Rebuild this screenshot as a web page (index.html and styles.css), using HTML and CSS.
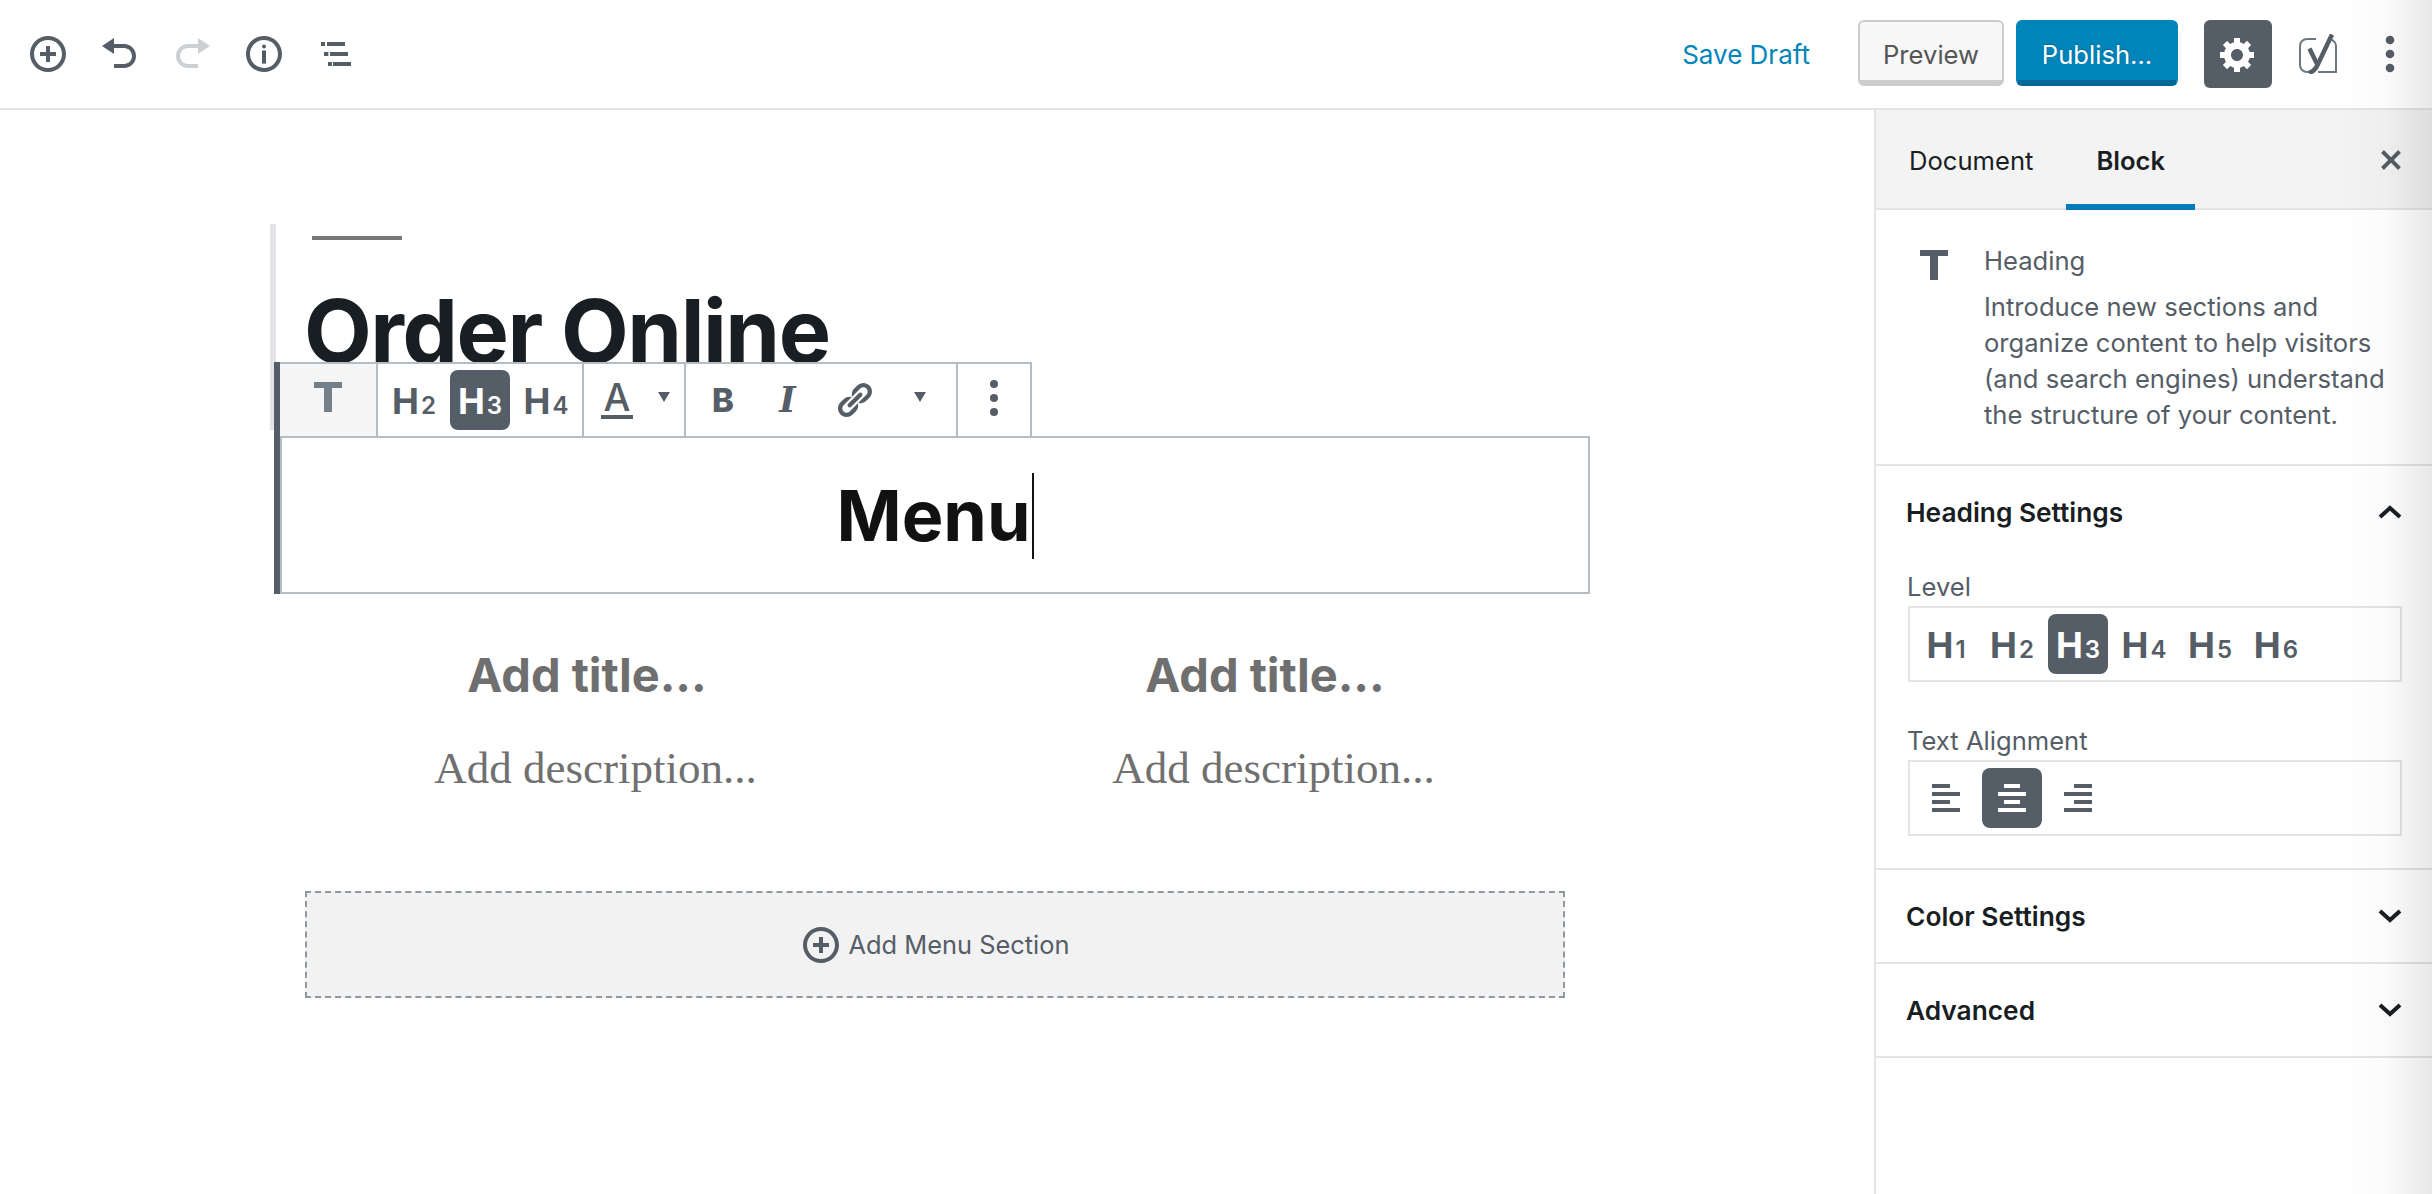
FILE: index.html
```html
<!DOCTYPE html>
<html lang="en">
<head>
<meta charset="utf-8">
<title>Edit Post</title>
<link rel="stylesheet" href="styles.css">
</head>
<body>
<div class="app">
  <header class="topbar">
    <div class="tools">
      <button class="tool"><svg viewBox="0 0 20 20"><path d="M10 1c-5 0-9 4-9 9s4 9 9 9 9-4 9-9-4-9-9-9zm0 16c-3.9 0-7-3.1-7-7s3.1-7 7-7 7 3.1 7 7-3.1 7-7 7zm1-11H9v3H6v2h3v3h2v-3h3V9h-3V6z"/></svg></button>
      <button class="tool"><svg viewBox="0 0 20 20"><path d="M12 5H7V2L1 6l6 4V7h5c2.2 0 4 1.8 4 4s-1.8 4-4 4H7v2h5c3.3 0 6-2.7 6-6s-2.7-6-6-6z"/></svg></button>
      <button class="tool tool-off"><svg viewBox="0 0 20 20"><path d="M8 5h5V2l6 4-6 4V7H8c-2.2 0-4 1.8-4 4s1.8 4 4 4h5v2H8c-3.3 0-6-2.7-6-6s2.7-6 6-6z"/></svg></button>
      <button class="tool"><svg viewBox="0 0 20 20"><path d="M10 1c-5 0-9 4-9 9s4 9 9 9 9-4 9-9-4-9-9-9zm0 16c-3.9 0-7-3.1-7-7s3.1-7 7-7 7 3.1 7 7-3.1 7-7 7z"/><circle cx="10" cy="6.2" r="1"/><rect x="9" y="8.2" width="2" height="6.6"/></svg></button>
      <button class="tool"><svg viewBox="0 0 20 20"><rect x="2.5" y="4" width="2" height="2"/><rect x="5.5" y="4" width="9" height="2"/><rect x="4" y="9" width="2.2" height="2"/><rect x="7" y="9" width="9" height="2"/><rect x="6" y="14" width="2" height="2"/><rect x="8.5" y="14" width="9" height="2"/></svg></button>
    </div>
    <div class="actions">
      <a class="save">Save Draft</a>
      <button class="btn btn-preview">Preview</button>
      <button class="btn btn-publish">Publish...</button>
      <button class="gear"><svg viewBox="0 0 20 20"><path d="M18 12h-2.18c-.17.7-.44 1.35-.81 1.93l1.54 1.54-2.1 2.1-1.54-1.54c-.58.36-1.23.63-1.91.79V19H8v-2.18c-.68-.16-1.33-.43-1.91-.79l-1.54 1.54-2.12-2.12 1.54-1.54c-.36-.58-.63-1.23-.79-1.91H1V9.03h2.17c.16-.7.44-1.35.8-1.94L2.43 5.55l2.1-2.1 1.54 1.54c.58-.37 1.24-.64 1.93-.81V2h3v2.18c.68.16 1.33.43 1.91.79l1.54-1.54 2.12 2.12-1.54 1.54c.36.59.64 1.24.8 1.94H18V12zm-8.5 1.5c1.66 0 3-1.34 3-3s-1.34-3-3-3-3 1.34-3 3 1.34 3 3 3z"/></svg></button>
      <svg class="yoast" viewBox="0 0 38 40"><path class="yoast-box" d="M17 5H8a7 7 0 0 0-7 7v19a7 7 0 0 0 7 7h6M31 5.500a6.500 6.500 0 0 1 6 6.500v26H19"/><path class="yoast-y" d="M10.500 14.500L18 30"/><path class="yoast-y" d="M33 .5L18.500 31c-1.800 4-4 6.500-8.500 7.800"/></svg>
      <svg class="dots" viewBox="0 0 40 40"><circle cx="20" cy="6" r="4.300"/><circle cx="20" cy="20" r="4.300"/><circle cx="20" cy="34" r="4.300"/></svg>
    </div>
  </header>

  <div class="main">
    <main class="editor">
      <section class="prev-block">
        <div class="rule"></div>
        <h1 class="order">Order Online</h1>
      </section>

      <section class="menu-block">
        <div class="side-bar"></div>
        <div class="block-toolbar">
          <div class="cell cell-type"><svg class="t-icon" viewBox="0 0 28 30"><path d="M0 0h28v6H18v24H10V6H0z"/></svg></div>
          <div class="cell cell-levels">
            <span class="hbtn"><b>H</b><i>2</i></span>
            <span class="hbtn hbtn-on"><b>H</b><i>3</i></span>
            <span class="hbtn"><b>H</b><i>4</i></span>
          </div>
          <div class="cell cell-color">
            <span class="color-a">A</span>
            <svg class="caret-down" viewBox="0 0 12 10"><path d="M0 0h12L6 10z"/></svg>
          </div>
          <div class="cell cell-format">
            <span class="fmt-b">B</span>
            <span class="fmt-i">I</span>
            <svg class="fmt-link" viewBox="0 0 20 20"><path d="M17.740 2.760c1.680 1.690 1.680 4.410 0 6.100l-1.530 1.520c-1.120 1.120-2.700 1.470-4.140 1.090l2.620-2.610.76-.77.76-.76c.84-.84.84-2.200 0-3.040-.84-.85-2.200-.85-3.040 0l-.77.76-3.380 3.380c-.37-1.440-.02-3.020 1.100-4.140l1.520-1.530c1.690-1.680 4.420-1.680 6.100 0zM8.590 13.430l5.340-5.340c.42-.42.42-1.100 0-1.520-.44-.43-1.130-.39-1.530 0l-5.330 5.340c-.42.42-.42 1.100 0 1.520.44.43 1.130.39 1.520 0zm-.76 2.290l4.140-4.150c.38 1.440.03 3.020-1.090 4.140l-1.520 1.530c-1.690 1.680-4.410 1.680-6.100 0-1.680-1.680-1.680-4.420 0-6.100l1.530-1.520c1.120-1.120 2.700-1.470 4.140-1.100l-4.140 4.150c-.85.84-.85 2.200 0 3.050.84.84 2.200.84 3.040 0z"/></svg>
            <svg class="caret-down caret-more" viewBox="0 0 12 10"><path d="M0 0h12L6 10z"/></svg>
          </div>
          <div class="cell cell-more"><svg class="more-dots" viewBox="0 0 8 36"><circle cx="4" cy="4" r="4"/><circle cx="4" cy="18" r="4"/><circle cx="4" cy="32" r="4"/></svg></div>
        </div>
        <h2 class="menu-title">Menu<span class="cursor"></span></h2>
      </section>

      <section class="columns">
        <div class="col">
          <h3 class="add-title">Add title...</h3>
          <p class="add-desc">Add description...</p>
        </div>
        <div class="col">
          <h3 class="add-title">Add title...</h3>
          <p class="add-desc">Add description...</p>
        </div>
      </section>

      <div class="add-section">
        <svg viewBox="0 0 20 20"><path d="M10 1c-5 0-9 4-9 9s4 9 9 9 9-4 9-9-4-9-9-9zm0 16c-3.900 0-7-3.100-7-7s3.100-7 7-7 7 3.100 7 7-3.100 7-7 7zm1-11H9v3H6v2h3v3h2v-3h3V9h-3V6z"/></svg>
        <span>Add Menu Section</span>
      </div>
    </main>

    <aside class="sidebar">
      <div class="tabs">
        <span class="tab tab-doc">Document</span>
        <span class="tab tab-on">Block</span>
        <svg class="close" viewBox="0 0 20 20"><path d="M14.950 6.460L11.410 10l3.540 3.540-1.410 1.410L10 11.420l-3.530 3.530-1.420-1.420L8.580 10 5.050 6.470l1.420-1.420L10 8.580l3.540-3.530z"/></svg>
      </div>

      <div class="block-info">
        <svg class="info-t" viewBox="0 0 28 30"><path d="M0 0h28v6H18v24H10V6H0z"/></svg>
        <div class="info-text">
          <div class="info-name">Heading</div>
          <p>Introduce new sections and organize content to help visitors (and search engines) understand the structure of your content.</p>
        </div>
      </div>

      <div class="panel">
        <div class="panel-head">
          <span>Heading Settings</span>
          <svg class="chev chev-up" viewBox="0 0 24 14"><path d="M2 12L12 3l10 9"/></svg>
        </div>
        <div class="panel-body">
          <label class="field-label">Level</label>
          <div class="option-box">
            <span class="hbtn"><b>H</b><i>1</i></span>
            <span class="hbtn"><b>H</b><i>2</i></span>
            <span class="hbtn hbtn-on"><b>H</b><i>3</i></span>
            <span class="hbtn"><b>H</b><i>4</i></span>
            <span class="hbtn"><b>H</b><i>5</i></span>
            <span class="hbtn"><b>H</b><i>6</i></span>
          </div>
          <label class="field-label field-gap">Text Alignment</label>
          <div class="option-box">
            <span class="hbtn"><svg viewBox="0 0 20 20"><path d="M12 5V3H3v2h9zm5 4V7H3v2h14zm-5 4v-2H3v2h9zm5 4v-2H3v2h14z"/></svg></span>
            <span class="hbtn hbtn-on"><svg viewBox="0 0 20 20"><path d="M14 5V3H6v2h8zm3 4V7H3v2h14zm-3 4v-2H6v2h8zm3 4v-2H3v2h14z"/></svg></span>
            <span class="hbtn"><svg viewBox="0 0 20 20"><path d="M17 5V3H8v2h9zm0 4V7H3v2h14zm0 4v-2H8v2h9zm0 4v-2H3v2h14z"/></svg></span>
          </div>
        </div>
      </div>

      <div class="panel">
        <div class="panel-head">
          <span>Color Settings</span>
          <svg class="chev" viewBox="0 0 24 14"><path d="M2 2l10 9 10-9"/></svg>
        </div>
      </div>

      <div class="panel">
        <div class="panel-head">
          <span>Advanced</span>
          <svg class="chev" viewBox="0 0 24 14"><path d="M2 2l10 9 10-9"/></svg>
        </div>
      </div>
    </aside>
  </div>
  <div class="edge-shade"></div>
</div>
</body>
</html>
```

FILE: styles.css
```css
* { box-sizing: border-box; }
html, body { margin: 0; padding: 0; background: #fff; }
body { font-family: "Inter", "Liberation Sans", sans-serif; color: #191e23; overflow: hidden; }
button { font: inherit; border: 0; background: none; padding: 0; margin: 0; }
h1, h2, h3, p { margin: 0; }

.app { position: relative; width: 2432px; height: 1194px; display: flex; flex-direction: column; overflow: hidden; }

/* top bar */
.topbar { flex: none; height: 110px; border-bottom: 2px solid #e2e4e7; display: flex; justify-content: space-between; padding: 0 22px 0 12px; }
.tools { display: flex; align-items: center; }
.tool { width: 72px; height: 40px; display: flex; justify-content: center; }
.tool svg { width: 40px; height: 40px; fill: #555d66; }
.tool-off svg { fill: #cdd0d3; }
.actions { display: flex; align-items: flex-start; padding-top: 20px; }
.save { margin-top: 17px; font-size: 26px; line-height: 36px; color: #0085ba; }
.btn { height: 66px; border-radius: 6px; font-size: 25.6px; line-height: 66px; text-align: center; }
.btn-preview { width: 146px; margin-left: 48px; background: #f7f7f7; color: #555; border: 2px solid #ccc; border-bottom-width: 6px; }
.btn-publish { width: 162px; margin-left: 12px; background: #0085ba; color: #fff; border: 2px solid #0085ba; border-bottom: 6px solid #006799; text-shadow: 0 -1px 2px #006799; }
.gear { width: 68px; height: 68px; margin-left: 26px; border-radius: 6px; background: #555d66; display: flex; align-items: center; justify-content: center; }
.gear svg { width: 40px; height: 40px; fill: #fff; }
.yoast { width: 38px; height: 40px; margin: 14px 0 0 27px; fill: none; stroke: #555d66; }
.yoast-box { stroke-width: 2; stroke: #6c7781; }
.yoast-y { stroke-width: 4.500; }
.dots { width: 40px; height: 40px; margin: 14px 0 0 33px; fill: #555d66; }

.main { flex: 1; display: flex; min-height: 0; }

/* editor */
.editor { flex: 1; min-width: 0; padding-top: 114px; }
.prev-block { margin-left: 270px; width: 900px; height: 206px; border-left: 6px solid #e2e4e7; padding-left: 28px; overflow: hidden; }
.rule { width: 90px; height: 4px; margin: 12px 0 0 8px; background: #777; }
.order { margin-top: 41px; font-size: 88px; line-height: 100px; font-weight: 700; letter-spacing: -1.500px; color: #191e23; white-space: nowrap; }

.menu-block { position: relative; margin: 6px 0 0 280px; width: 1310px; height: 158px; border: 2px solid #b5bcc2; padding-top: 2px; display: flex; align-items: center; justify-content: center; }
.side-bar { position: absolute; left: -8px; top: -76px; bottom: -2px; width: 6px; background: #555d66; }
.block-toolbar { position: absolute; left: -2px; top: -76px; width: 752px; height: 74px; background: #fff; border-top: 2px solid #b5bcc2; display: flex; }
.cell { height: 100%; border-right: 2px solid #b5bcc2; display: flex; align-items: center; flex: none; }
.cell-type { width: 98px; background: #f5f5f5; justify-content: center; }
.t-icon { width: 28px; height: 30px; fill: #757f88; margin-bottom: 6px; }
.cell-levels { width: 206px; padding-left: 6px; gap: 6px; }
.cell-color { width: 102px; position: relative; }
.cell-format { width: 272px; position: relative; }
.cell-more { width: 74px; justify-content: center; }
.more-dots { width: 8px; height: 36px; fill: #555d66; margin-bottom: 4px; }
.color-a { margin-left: 17px; width: 32px; padding-bottom: 2px; border-bottom: 4px solid #555d66; text-align: center; font-size: 38px; font-weight: 500; line-height: 32px; color: #555d66; }
.caret-down { width: 12px; height: 10px; fill: #555d66; margin-left: 25px; margin-bottom: 6px; }
.fmt-b { margin-left: 26px; width: 19px; font-size: 33px; line-height: 40px; font-weight: 800; color: #555d66; }
.fmt-i { margin-left: 46px; width: 21px; font-family: "DejaVu Serif", serif; font-style: italic; font-weight: 700; font-size: 35px; line-height: 40px; color: #555d66; text-align: center; }
.fmt-link { width: 40px; height: 40px; margin-left: 36px; fill: #555d66; }
.caret-more { margin-left: 40px; }

.hbtn { width: 60px; height: 60px; flex: none; border-radius: 8px; color: #555d66; display: flex; align-items: baseline; justify-content: center; line-height: 62px; }
.hbtn b { font-size: 36px; font-weight: 700; }
.hbtn i { font-style: normal; font-size: 24px; font-weight: 600; margin-left: 2px; }
.hbtn svg { width: 40px; height: 40px; margin-top: 10px; fill: #555d66; }
.hbtn-on { background: #555d66; color: #fff; }
.hbtn-on svg { fill: #fff; }

.menu-title { font-size: 70px; line-height: 90px; font-weight: 700; color: #111; }
.cursor { display: inline-block; width: 2px; height: 86px; margin-left: 1px; background: #111; vertical-align: -18px; }

.columns { display: grid; grid-template-columns: 564px 564px; column-gap: 114px; margin: 51px 0 0 305px; width: 1242px; }
.col { text-align: center; }
.add-title { font-size: 47px; line-height: 60px; font-weight: 700; color: #6f6f6f; }
.add-desc { margin-top: 33px; padding-left: 17px; font-family: "Liberation Serif", serif; font-size: 45px; line-height: 60px; color: #707070; }

.add-section { margin: 93px 0 0 305px; width: 1260px; height: 107px; background: #f2f2f2; border: 2px dashed #8f98a1; display: flex; align-items: center; justify-content: center; gap: 8px; font-size: 25.400px; color: #555d66; }
.add-section svg { width: 40px; height: 40px; fill: #555d66; }

/* sidebar */
.sidebar { flex: none; width: 558px; border-left: 2px solid #e2e4e7; }
.tabs { height: 100px; background: #f3f3f4; border-bottom: 2px solid #e2e4e7; display: flex; padding-left: 3px; align-items: flex-start; position: relative; }
.tab { height: 100px; padding: 0 30px; font-size: 25.600px; line-height: 102px; color: #191e23; }
.tab-doc { margin-right: 3px; }
.tab-on { font-weight: 600; border-bottom: 6px solid #0079bd; }
.close { position: absolute; top: 30px; right: 21px; width: 40px; height: 40px; fill: #555d66; }

.block-info { display: flex; height: 256px; border-bottom: 2px solid #e2e4e7; padding: 33px 0 0 44px; }
.info-t { flex: none; width: 28px; height: 30px; margin-top: 7px; fill: #555d66; }
.info-text { margin-left: 36px; width: 430px; color: #555d66; font-size: 25.600px; line-height: 36px; }
.info-text p { margin-top: 10px; }

.panel { border-bottom: 2px solid #e2e4e7; }
.panel-head { height: 92px; padding: 0 30px 0 30px; display: flex; align-items: center; justify-content: space-between; font-size: 26.300px; font-weight: 600; color: #191e23; }
.chev { width: 24px; height: 14px; fill: none; stroke: #191e23; stroke-width: 4; }
.panel-body { padding: 11px 30px 32px 31px; }
.field-label { display: block; font-size: 25.600px; line-height: 36px; color: #555d66; }
.field-gap { margin-top: 41px; }
.option-box { margin: 1px 0 0 1px; height: 76px; border: 2px solid #e2e4e7; padding: 6px; display: flex; gap: 6px; }

.edge-shade { position: absolute; top: 0; right: 0; bottom: 0; width: 90px; background: linear-gradient(to right, rgba(0,0,0,0), rgba(0,0,0,.02) 50%, rgba(0,0,0,.09)); pointer-events: none; }
```
